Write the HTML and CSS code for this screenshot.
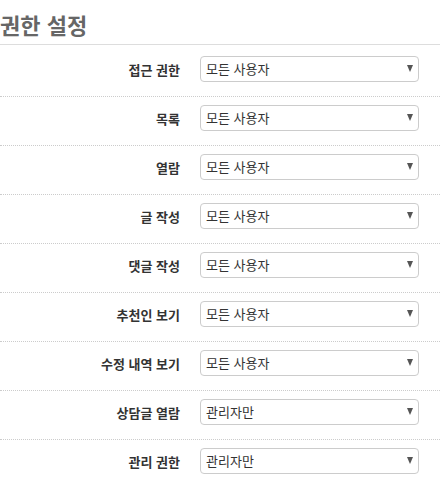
FILE: index.html
```html
<!DOCTYPE html>
<html lang="ko">

<head>
  <meta charset="UTF-8">
  <title>권한 설정</title>
  <link rel="stylesheet" href="styles.css">
</head>

<body>
  <div class="perm">
    <h2 class="perm-tit">권한 설정</h2>
    <ul class="perm-list">
      <li class="perm-row">
        <label class="perm-label">접근 권한</label>
        <span class="perm-sel"><select><option>모든 사용자</option></select></span>
      </li>
      <li class="perm-row">
        <label class="perm-label">목록</label>
        <span class="perm-sel"><select><option>모든 사용자</option></select></span>
      </li>
      <li class="perm-row">
        <label class="perm-label">열람</label>
        <span class="perm-sel"><select><option>모든 사용자</option></select></span>
      </li>
      <li class="perm-row">
        <label class="perm-label">글 작성</label>
        <span class="perm-sel"><select><option>모든 사용자</option></select></span>
      </li>
      <li class="perm-row">
        <label class="perm-label">댓글 작성</label>
        <span class="perm-sel"><select><option>모든 사용자</option></select></span>
      </li>
      <li class="perm-row">
        <label class="perm-label">추천인 보기</label>
        <span class="perm-sel"><select><option>모든 사용자</option></select></span>
      </li>
      <li class="perm-row">
        <label class="perm-label">수정 내역 보기</label>
        <span class="perm-sel"><select><option>모든 사용자</option></select></span>
      </li>
      <li class="perm-row">
        <label class="perm-label">상담글 열람</label>
        <span class="perm-sel"><select><option>관리자만</option></select></span>
      </li>
      <li class="perm-row">
        <label class="perm-label">관리 권한</label>
        <span class="perm-sel"><select><option>관리자만</option></select></span>
      </li>
    </ul>
  </div>
</body>

</html>
```

FILE: styles.css
```css
body,
h2,
ul {
  margin: 0;
}

ul {
  padding: 0;
  list-style: none;
}

body {
  font-family: "Noto Sans CJK KR", "Noto Sans", sans-serif;
  color: #333;
  background-color: #fff;
}

.perm-tit {
  padding: 13px 0 9px;
  font-size: 22px;
  line-height: 22px;
  font-weight: bold;
  color: #666;
  border-bottom: 1px solid #ddd;
}

.perm-list {
  margin-top: 3px;
}

.perm-row {
  display: flex;
  align-items: center;
  padding: 8px 0 14px;
  border-bottom: 1px dotted #ccc;
}

.perm-row:last-child {
  border-bottom: none;
}

.perm-label {
  width: 180px;
  text-align: right;
  font-size: 13px;
  font-weight: bold;
  color: #333;
}

.perm-sel {
  position: relative;
  margin-left: 20px;
  width: 219px;
}

.perm-sel select {
  appearance: none;
  -webkit-appearance: none;
  display: block;
  width: 100%;
  height: 26px;
  padding: 0 20px 0 5px;
  border: 1px solid #ccc;
  border-radius: 4px;
  background-color: #fff;
  font: 13px/24px "Noto Sans CJK KR", "Noto Sans", sans-serif;
  color: #333;
}

.perm-sel::after {
  content: "";
  position: absolute;
  right: 6px;
  top: 9px;
  border-left: 3px solid transparent;
  border-right: 3px solid transparent;
  border-top: 7px solid #555;
  pointer-events: none;
}
```
